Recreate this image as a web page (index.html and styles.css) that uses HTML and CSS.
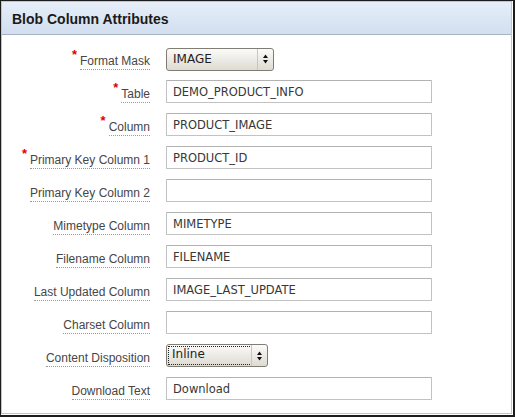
FILE: index.html
```html
<!DOCTYPE html>
<html lang="en">
<head>
<meta charset="utf-8">
<title>Blob Column Attributes</title>
<link rel="stylesheet" href="styles.css">
</head>
<body>
<div class="frame">
  <section class="panel">
    <header class="panel-head"><h2>Blob Column Attributes</h2></header>
    <div class="form">
      <div class="label"><span class="req">*</span><span class="lbl">Format Mask</span></div>
      <div class="field"><span class="select w1"><span class="sel-val">IMAGE</span><span class="sel-btn"><svg width="5" height="10" viewBox="0 0 5 10"><path d="M0 4L2.5 0.5L5 4Z M0 6L5 6L2.5 9.5Z" fill="#111"/></svg></span></span></div>

      <div class="label"><span class="req">*</span><span class="lbl">Table</span></div>
      <div class="field"><span class="input">DEMO_PRODUCT_INFO</span></div>

      <div class="label"><span class="req">*</span><span class="lbl">Column</span></div>
      <div class="field"><span class="input">PRODUCT_IMAGE</span></div>

      <div class="label"><span class="req">*</span><span class="lbl">Primary Key Column 1</span></div>
      <div class="field"><span class="input">PRODUCT_ID</span></div>

      <div class="label"><span class="lbl">Primary Key Column 2</span></div>
      <div class="field"><span class="input"></span></div>

      <div class="label"><span class="lbl">Mimetype Column</span></div>
      <div class="field"><span class="input">MIMETYPE</span></div>

      <div class="label"><span class="lbl">Filename Column</span></div>
      <div class="field"><span class="input">FILENAME</span></div>

      <div class="label"><span class="lbl">Last Updated Column</span></div>
      <div class="field"><span class="input">IMAGE_LAST_UPDATE</span></div>

      <div class="label"><span class="lbl">Charset Column</span></div>
      <div class="field"><span class="input"></span></div>

      <div class="label"><span class="lbl">Content Disposition</span></div>
      <div class="field"><span class="select w2"><span class="sel-val focus">Inline</span><span class="sel-btn"><svg width="5" height="10" viewBox="0 0 5 10"><path d="M0 4L2.5 0.5L5 4Z M0 6L5 6L2.5 9.5Z" fill="#111"/></svg></span></span></div>

      <div class="label"><span class="lbl">Download Text</span></div>
      <div class="field"><span class="input">Download</span></div>
    </div>
  </section>
</div>
</body>
</html>
```
FILE: styles.css
```css
html, body {
  margin: 0;
  padding: 0;
  background: #fff;
}

.frame {
  width: 511px;
  height: 413px;
  border-left: 1px solid #1c1c1c;
  border-top: 1px solid #1c1c1c;
  border-right: 2px solid #1c1c1c;
  border-bottom: 2px solid #1c1c1c;
  padding: 0 1px 1px 0;
  background: #fff;
}

.panel {
  box-sizing: border-box;
  width: 511px;
  height: 413px;
  border: 1px solid #c4c4c4;
  background: #fff;
}

.panel-head {
  box-sizing: content-box;
  height: 29px;
  padding: 3px 0 0 10px;
  border-bottom: 1px solid #a7b3c4;
  background: linear-gradient(#e6eef9, #d2dfef);
}

.panel-head h2 {
  margin: 0;
  font: bold 14px/29px "Liberation Sans", Arial, sans-serif;
  color: #1a1a1a;
}

.form {
  display: grid;
  grid-template-columns: 148px 1fr;
  grid-auto-rows: 23px;
  column-gap: 16px;
  row-gap: 10px;
  padding: 12px 0;
}

.label {
  display: flex;
  justify-content: flex-end;
  align-items: flex-start;
  padding-top: 7px;
  font: 12px/14px "Liberation Sans", Arial, sans-serif;
  color: #464646;
}

.req {
  color: #e00000;
  font-weight: bold;
  font-size: 13px;
  margin-top: -6px;
  margin-right: 3px;
}

.lbl {
  padding-bottom: 1px;
  border-bottom: 1px dotted #9a9a9a;
  white-space: nowrap;
}

.field {
  display: flex;
  align-items: center;
}

.input {
  box-sizing: border-box;
  width: 266px;
  height: 23px;
  border: 1px solid #c2c2c2;
  border-top-color: #b2b2b2;
  border-radius: 1px;
  padding: 1px 6px 0;
  font: 11.5px/20px "DejaVu Sans", sans-serif;
  color: #383838;
  background: #fff;
  white-space: nowrap;
}

.select {
  box-sizing: border-box;
  height: 23px;
  display: flex;
  border: 1px solid #7f7d74;
  border-radius: 3px;
  background: linear-gradient(#fbfbf9, #e9e7e1 60%, #dedbd2);
  font: 12px/21px "DejaVu Sans", sans-serif;
  color: #1e1e1e;
}

.select.w1 { width: 108px; margin-top: 1px; }
.select.w2 { width: 102px; }

.sel-val {
  flex: 1;
  padding-left: 6px;
}

.sel-val.focus {
  margin: 2px 0 2px 2px;
  padding-left: 3px;
  line-height: 15px;
  outline: 1px dotted #222;
}

.sel-btn {
  width: 15px;
  border-left: 1px solid #c9c6bd;
  display: flex;
  align-items: center;
  justify-content: center;
}

.sel-btn svg {
  display: block;
}
```
